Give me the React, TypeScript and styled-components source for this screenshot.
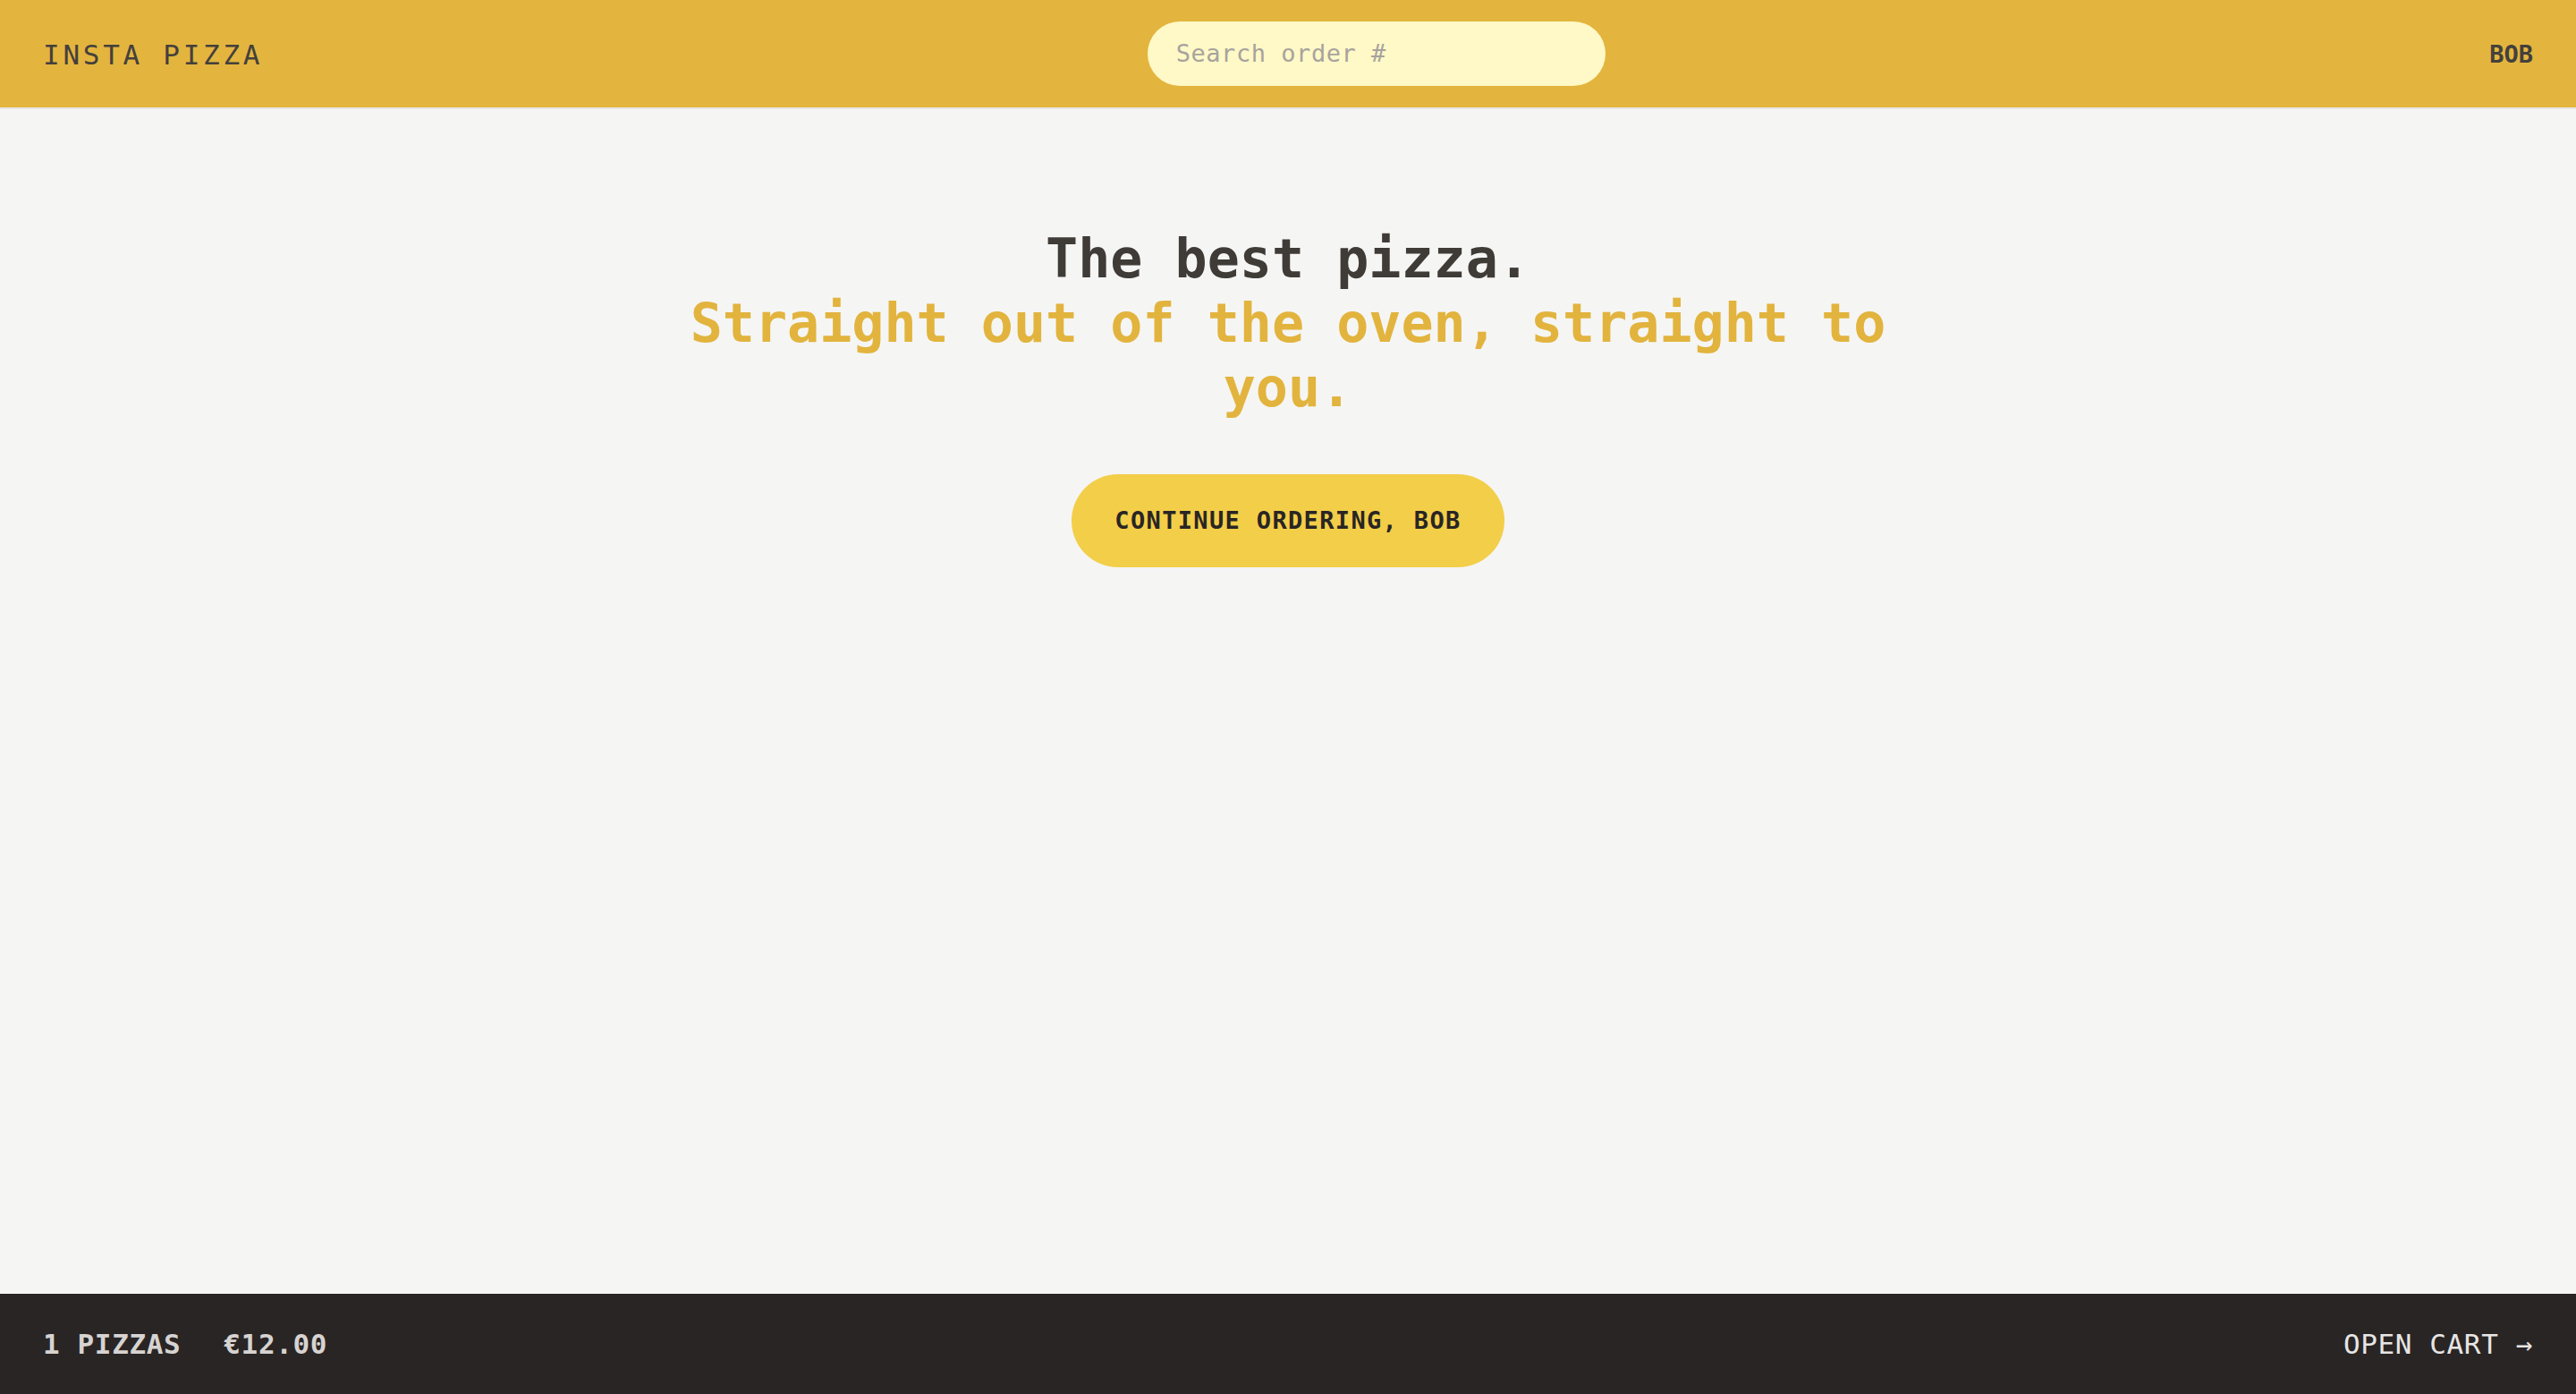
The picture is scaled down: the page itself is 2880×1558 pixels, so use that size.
import styled, { createGlobalStyle } from 'styled-components';

const GlobalStyle = createGlobalStyle`
	* {
		box-sizing: border-box;
	}

	body {
		margin: 0;
		background-color: #f5f5f4;
		color: #44403c;
		font-family: 'DejaVu Sans Mono', 'Liberation Mono', monospace;
	}
`;

const Layout = styled.div`
	display: grid;
	grid-template-rows: auto 1fr auto;
	height: 100vh;
`;

const Header = styled.header`
	display: flex;
	align-items: center;
	justify-content: space-between;
	padding: 24px 48px;
	background-color: #e3b53e;
	border-bottom: 2px solid #e7e5e4;
	text-transform: uppercase;
`;

const Logo = styled.a`
	padding-top: 1px;
	font-size: 31px;
	line-height: 48px;
	letter-spacing: 0.12em;
	color: #44403c;
	text-decoration: none;
`;

const SearchInput = styled.input`
	width: 512px;
	padding: 16px 32px;
	border: none;
	border-radius: 9999px;
	background-color: #fef9c6;
	font-family: inherit;
	font-size: 27px;
	line-height: 40px;
	letter-spacing: 0.02em;
	color: #44403c;
	outline: none;

	&::placeholder {
		color: #a8a29e;
	}
`;

const Username = styled.div`
	padding-top: 2px;
	font-size: 27px;
	line-height: 40px;
	font-weight: 600;
`;

const Main = styled.main`
	max-width: 1536px;
	margin: 0 auto;
	overflow: auto;
`;

const Hero = styled.div`
	margin: 128px 0;
	padding: 0 32px;
	text-align: center;
`;

const Title = styled.h1`
	margin: 0 0 64px;
	padding-top: 3px;
	font-size: 60px;
	line-height: 72px;
	font-weight: 600;
	color: #3f3b37;
`;

const Accent = styled.span`
	color: #e2b43e;
`;

const PrimaryButton = styled.a`
	display: inline-block;
	margin-top: -3px;
	padding: 32px 48px;
	border-radius: 9999px;
	background-color: #f3ce48;
	font-size: 27px;
	line-height: 40px;
	font-weight: 600;
	letter-spacing: 0.05em;
	text-transform: uppercase;
	color: #292524;
	text-decoration: none;
	cursor: pointer;
`;

const CartBar = styled.div`
	display: flex;
	align-items: center;
	justify-content: space-between;
	padding: 32px 48px;
	background-color: #292524;
	color: #e7e5e4;
	font-size: 31px;
	line-height: 48px;
	text-transform: uppercase;
`;

const CartSummary = styled.p`
	display: flex;
	gap: 48px;
	margin: 0;
	font-weight: 600;
	letter-spacing: 0.02em;
	color: #d6d3d1;
`;

const CartLink = styled.a`
	letter-spacing: 0.02em;
	color: #e7e5e4;
	text-decoration: none;
`;

export default function App() {
	const username = 'Bob';
	const quantity = 1;
	const price = 12;

	return (
		<Layout>
			<GlobalStyle />
			<Header>
				<Logo href='#'>Insta Pizza</Logo>
				<SearchInput placeholder='Search order #' />
				<Username>{username}</Username>
			</Header>
			<Main>
				<Hero>
					<Title>
						The best pizza.
						<br />
						<Accent>Straight out of the oven, straight to you.</Accent>
					</Title>
					<PrimaryButton>Continue ordering, {username}</PrimaryButton>
				</Hero>
			</Main>
			<CartBar>
				<CartSummary>
					<span>{quantity} pizzas</span>
					<span>€{price.toFixed(2)}</span>
				</CartSummary>
				<CartLink href='#'>Open cart &rarr;</CartLink>
			</CartBar>
		</Layout>
	);
}
